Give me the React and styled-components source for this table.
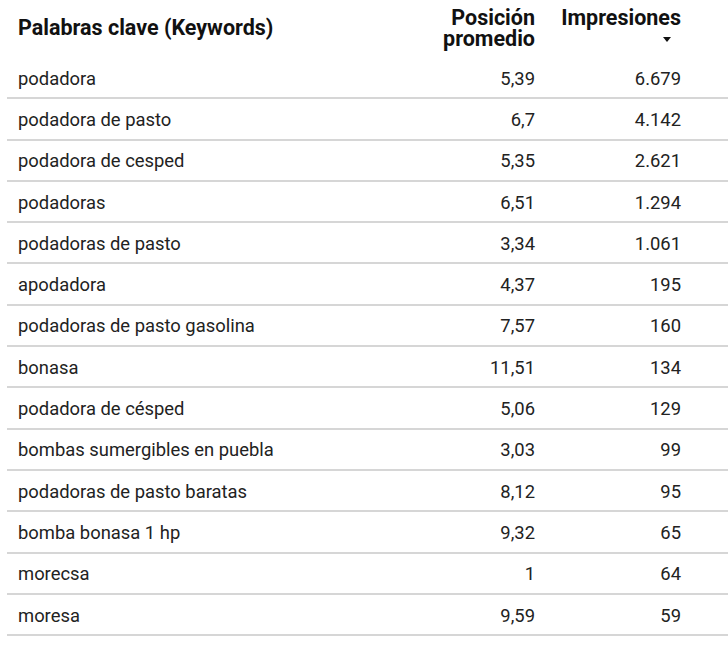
import React from 'react';
import styled, { createGlobalStyle } from 'styled-components';

const GlobalStyle = createGlobalStyle`
  html, body {
    margin: 0;
    padding: 0;
    background: #fff;
  }
  body {
    font-family: Roboto, 'Liberation Sans', sans-serif;
    color: #202124;
  }
`;

const Table = styled('div')`
  width: 728px;
  padding-left: 7px;
  box-sizing: border-box;
`;

const HeaderRow = styled('div')`
  display: flex;
  align-items: flex-start;
  height: 58px;
  padding-right: 47px;
`;

const HeadCell = styled('div')`
  font-size: 21.5px;
  font-weight: 700;
  line-height: 21px;
  color: #111;
  text-align: ${(p) => (p.$num ? 'right' : 'left')};
  width: ${(p) => p.$width || 'auto'};
  flex: ${(p) => (p.$grow ? 1 : 'none')};
  padding-left: ${(p) => (p.$grow ? '11px' : '0')};
  padding-top: ${(p) => p.$top || '7px'};
`;

const SortArrow = styled('div')`
  display: flex;
  justify-content: flex-end;
  padding-right: 10px;
  margin-top: 9px;

  &::after {
    content: '';
    width: 0;
    height: 0;
    border-left: 4px solid transparent;
    border-right: 4px solid transparent;
    border-top: 5px solid #111;
  }
`;

const Row = styled('div')`
  display: flex;
  align-items: center;
  height: 41.3px;
  box-sizing: border-box;
  border-bottom: 2px solid #d6d6d6;
  padding-right: 47px;
  font-size: 18.4px;
  color: #222;
`;

const Cell = styled('div')`
  flex: ${(p) => (p.$grow ? 1 : 'none')};
  width: ${(p) => p.$width || 'auto'};
  text-align: ${(p) => (p.$num ? 'right' : 'left')};
  padding-left: ${(p) => (p.$grow ? '11px' : '0')};
  padding-top: 1px;
  white-space: nowrap;
`;

const rows = [
  ['podadora', '5,39', '6.679'],
  ['podadora de pasto', '6,7', '4.142'],
  ['podadora de cesped', '5,35', '2.621'],
  ['podadoras', '6,51', '1.294'],
  ['podadoras de pasto', '3,34', '1.061'],
  ['apodadora', '4,37', '195'],
  ['podadoras de pasto gasolina', '7,57', '160'],
  ['bonasa', '11,51', '134'],
  ['podadora de césped', '5,06', '129'],
  ['bombas sumergibles en puebla', '3,03', '99'],
  ['podadoras de pasto baratas', '8,12', '95'],
  ['bomba bonasa 1 hp', '9,32', '65'],
  ['morecsa', '1', '64'],
  ['moresa', '9,59', '59'],
];

export default function App() {
  return (
    <>
      <GlobalStyle />
      <Table>
        <HeaderRow>
          <HeadCell $grow $top="17px">Palabras clave (Keywords)</HeadCell>
          <HeadCell $num $width="120px">
            Posición
            <br />
            promedio
          </HeadCell>
          <HeadCell $num $width="146px">
            Impresiones
            <SortArrow />
          </HeadCell>
        </HeaderRow>
        {rows.map(([kw, pos, imp]) => (
          <Row key={kw}>
            <Cell $grow>{kw}</Cell>
            <Cell $num $width="120px">{pos}</Cell>
            <Cell $num $width="146px">{imp}</Cell>
          </Row>
        ))}
      </Table>
    </>
  );
}
